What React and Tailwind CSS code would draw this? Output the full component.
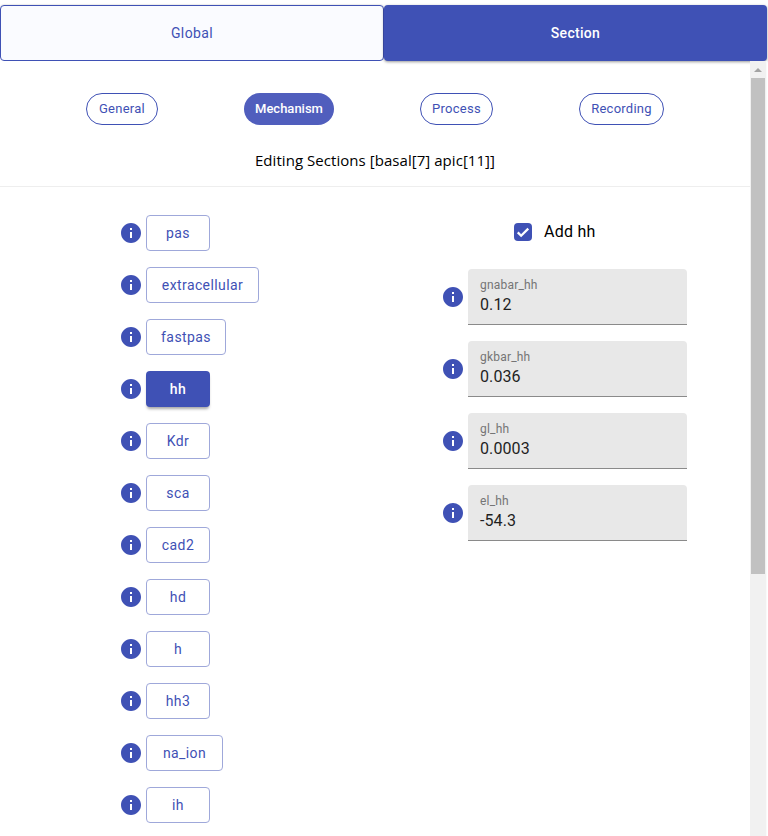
const mechanisms = [
  { name: 'pas', width: 'w-16' },
  { name: 'extracellular', width: 'w-[113px]' },
  { name: 'fastpas', width: 'w-20' },
  { name: 'hh', width: 'w-16' },
  { name: 'Kdr', width: 'w-16' },
  { name: 'sca', width: 'w-16' },
  { name: 'cad2', width: 'w-16' },
  { name: 'hd', width: 'w-16' },
  { name: 'h', width: 'w-16' },
  { name: 'hh3', width: 'w-16' },
  { name: 'na_ion', width: 'w-[77px]' },
  { name: 'ih', width: 'w-16' },
];

const fields = [
  { label: 'gnabar_hh', value: '0.12' },
  { label: 'gkbar_hh', value: '0.036' },
  { label: 'gl_hh', value: '0.0003' },
  { label: 'el_hh', value: '-54.3' },
];

const pills = [
  { name: 'General', width: 'w-[72px]' },
  { name: 'Mechanism', width: 'w-[90px]' },
  { name: 'Process', width: 'w-[73px]' },
  { name: 'Recording', width: 'w-[85px]' },
];

const InfoIcon = () => (
  <svg viewBox="0 0 24 24" className="w-6 h-6 shrink-0 fill-[#3f51b5]">
    <path d="M12 2C6.48 2 2 6.48 2 12s4.48 10 10 10 10-4.48 10-10S17.52 2 12 2zm1 15h-2v-6h2v6zm0-8h-2V7h2v2z" />
  </svg>
);

const App = () => {
  return (
    <div className="w-[768px] h-[836px] overflow-hidden bg-white flex flex-col font-['Roboto',sans-serif]">
      {/* Tabs */}
      <div className="flex pt-[5px] pr-px shrink-0">
        <button className="w-[384px] h-[56px] border border-[#3f51b5] rounded bg-[#fafbff] text-[#3f51b5] text-sm tracking-[0.4px] shadow-[0_-1px_1px_rgba(0,0,0,0.08)]">
          Global
        </button>
        <button className="w-[383px] h-[56px] rounded bg-[#3f51b5] text-white text-sm font-medium tracking-[0.3px] shadow-[0_1px_3px_rgba(0,0,0,0.4)]">
          Section
        </button>
      </div>

      <div className="flex flex-1 min-h-0">
        <div className="w-[750px] overflow-hidden">
          {/* Pills */}
          <div className="flex justify-evenly pt-8">
            {pills.map((pill) =>
              pill.name === 'Mechanism' ? (
                <button key={pill.name} className={`${pill.width} h-8 rounded-2xl bg-[#505ebd] text-white text-[13px] font-medium`}>
                  {pill.name}
                </button>
              ) : (
                <button key={pill.name} className={`${pill.width} h-8 rounded-2xl border border-[#3f51b5] text-[#3f51b5] text-[13px] tracking-[0.25px]`}>
                  {pill.name}
                </button>
              )
            )}
          </div>

          <p className="mt-[23px] h-6 text-center text-[15px] leading-6 tracking-[0.05px] text-black font-['Open_Sans',sans-serif]">
            Editing Sections [basal[7] apic[11]]
          </p>
          <div className="mt-[14px] border-b border-[#eeeeee]" />

          <div className="flex pt-7">
            {/* Mechanism list */}
            <div className="w-[441px] pl-[119px] flex flex-col gap-4">
              {mechanisms.map(({ name, width }) => (
                <div key={name} className="flex items-center gap-[3px] h-9">
                  <InfoIcon />
                  {name === 'hh' ? (
                    <button className={`${width} h-9 rounded bg-[#3f51b5] text-white text-sm font-medium tracking-[0.4px] shadow-[0_3px_3px_-1px_rgba(0,0,0,0.35)]`}>
                      {name}
                    </button>
                  ) : (
                    <button className={`${width} h-9 rounded border border-[#9fa8da] text-[#3f51b5] text-sm tracking-[0.4px]`}>
                      {name}
                    </button>
                  )}
                </div>
              ))}
            </div>

            {/* Parameters */}
            <div className="flex-1">
              <div className="flex items-center h-9 -mt-px pl-[73px] gap-3">
                <span className="w-[18px] h-[18px] rounded-sm bg-[#3f51b5] flex items-center justify-center">
                  <svg viewBox="0 0 24 24" className="w-[18px] h-[18px] fill-none stroke-white stroke-[3]">
                    <path d="M5 12.5l4.5 4.5L19 7.5" />
                  </svg>
                </span>
                <span className="text-base tracking-[0.25px] text-black">Add hh</span>
              </div>
              <div className="mt-[19px] flex flex-col gap-4">
                {fields.map((field) => (
                  <div key={field.label} className="flex items-center gap-[3px]">
                    <InfoIcon />
                    <div className="w-[219px] h-14 pl-3 pt-[9px] rounded-t bg-[#e8e8e8] border-b border-[#8a8a8a]">
                      <div className="text-xs leading-[14px] tracking-[0.2px] text-[#757575]">{field.label}</div>
                      <div className="mt-[1px] text-base leading-[24px] tracking-[0.1px] text-[#1f1f1f]">{field.value}</div>
                    </div>
                  </div>
                ))}
              </div>
            </div>
          </div>
        </div>

        {/* Scrollbar */}
        <div className="w-[17px] bg-[#f1f1f1] flex flex-col border-r border-[#fafafa]">
          <div className="h-[17px] flex items-center justify-center">
            <span className="w-0 h-0 border-x-4 border-x-transparent border-b-4 border-b-[#a3a3a3]" />
          </div>
          <div className="h-[496px] bg-[#c1c1c1] mx-px" />
        </div>
      </div>
    </div>
  );
};

export default App;
